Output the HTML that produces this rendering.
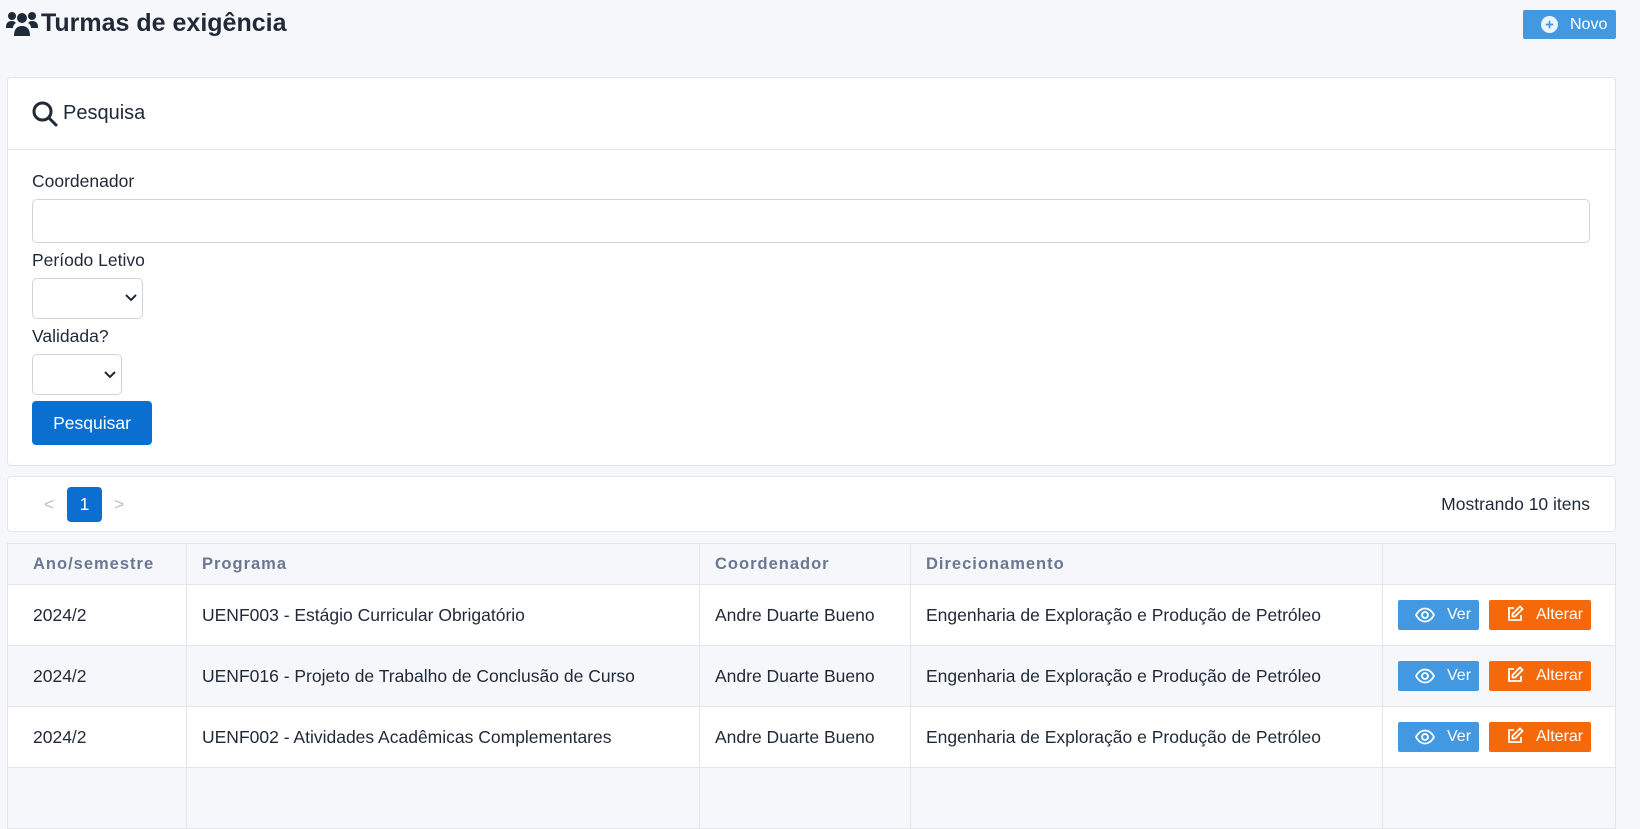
<!DOCTYPE html>
<html><head><meta charset="utf-8"><style>
*{box-sizing:border-box;margin:0;padding:0}
body{width:1640px;height:773px;overflow:hidden;background:#f6f7fb;font-family:"Liberation Sans",sans-serif;color:#1f2937;font-size:17.5px;position:relative}
.abs{position:absolute}
.card{position:absolute;background:#fff;border:1px solid #e2e5ec;border-radius:4px}
.inp{position:absolute;background:#fff;border:1px solid #cfd4dc;border-radius:5px}
table{position:absolute;left:7px;top:543px;width:1609px;border-collapse:collapse;background:#fff;border:1px solid #e2e5ec}
th{height:41px;background:#f6f7fb;color:#6b7891;font-weight:bold;text-align:left;font-size:16.5px;letter-spacing:1px;padding:0 0 0 15px;border:1px solid #e2e5ec}
td{height:61px;padding:0 0 0 15px;border:1px solid #e2e5ec;font-size:17.5px}
th:first-child,td:first-child{padding-left:25px}
tr.alt td{background:#f6f7fb}
.b{display:inline-block;height:30px;line-height:30px;color:#fff;border-radius:2px;font-size:16px;vertical-align:middle}
.ver{background:#4299e1;width:81px;margin-left:15px;padding-left:17px}
.alt2{background:#f6690b;width:102px;margin-left:10px;padding-left:17px}
.b svg{vertical-align:-4px;margin-right:12px}
</style></head><body>
<svg class="abs" style="left:6px;top:11px" width="32" height="26" viewBox="0 0 32 26" fill="#1f2937"><circle cx="6" cy="5" r="4"/><circle cx="26" cy="5" r="4"/><circle cx="16" cy="7" r="5"/><path d="M0 16c0-4 2-6 6-6 2 0 3 1 4 2-2 1-3 3-3 5H0z"/><path d="M32 16c0-4-2-6-6-6-2 0-3 1-4 2 2 1 3 3 3 5h7z"/><path d="M8 25c0-7 3-10 8-10s8 3 8 10z"/></svg>
<div class="abs" style="left:41px;top:9px;font-size:25px;font-weight:bold;color:#1f2937">Turmas de exigência</div>
<div class="abs" style="left:1523px;top:10px;width:93px;height:29px;background:#4299e1;border-radius:2px;color:#fff;font-size:16px;line-height:29px;padding-left:47px">Novo</div>
<svg class="abs" style="left:1541px;top:16px" width="17" height="17" viewBox="0 0 16 16"><circle cx="8" cy="8" r="8" fill="#fff" opacity=".9"/><path d="M8 4.5v7M4.5 8h7" stroke="#4299e1" stroke-width="1.6"/></svg>

<div class="card" style="left:7px;top:77px;width:1609px;height:389px">
 <div style="height:72px;border-bottom:1px solid #e2e5ec"></div>
</div>
<svg class="abs" style="left:32px;top:101px" width="26" height="26" viewBox="0 0 26 26" fill="none" stroke="#1f2937" stroke-width="3"><circle cx="10.5" cy="10.5" r="8.5"/><path d="M17 17l7 7" stroke-linecap="round"/></svg>
<div class="abs" style="left:63px;top:102px;font-size:20px">Pesquisa</div>
<div class="abs" style="left:32px;top:171px">Coordenador</div>
<div class="inp" style="left:32px;top:199px;width:1558px;height:44px"></div>
<div class="abs" style="left:32px;top:250px">Período Letivo</div>
<div class="inp" style="left:32px;top:278px;width:111px;height:41px"></div>
<svg class="abs" style="left:125px;top:294px" width="12" height="8" viewBox="0 0 12 8"><path d="M1 1l5 5 5-5" stroke="#1f2937" stroke-width="2" fill="none"/></svg>
<div class="abs" style="left:32px;top:326px">Validada?</div>
<div class="inp" style="left:32px;top:354px;width:90px;height:41px"></div>
<svg class="abs" style="left:104px;top:371px" width="12" height="8" viewBox="0 0 12 8"><path d="M1 1l5 5 5-5" stroke="#1f2937" stroke-width="2" fill="none"/></svg>
<div class="abs" style="left:32px;top:401px;width:120px;height:44px;background:#0b6fd1;border-radius:4px;color:#fff;line-height:44px;text-align:center">Pesquisar</div>

<div class="card" style="left:7px;top:476px;width:1609px;height:56px"></div>
<div class="abs" style="left:44px;top:494px;color:#b8c0cc">&lt;</div>
<div class="abs" style="left:67px;top:487px;width:35px;height:35px;background:#0b6fd1;border-radius:4px;color:#fff;text-align:center;line-height:35px">1</div>
<div class="abs" style="left:114px;top:494px;color:#b8c0cc">&gt;</div>
<div class="abs" style="right:50px;top:494px">Mostrando 10 itens</div>

<table>
<tr><th style="width:179px">Ano/semestre</th><th style="width:513px">Programa</th><th style="width:211px">Coordenador</th><th style="width:472px">Direcionamento</th><th></th></tr>
<tr><td>2024/2</td><td>UENF003 - Estágio Curricular Obrigatório</td><td>Andre Duarte Bueno</td><td>Engenharia de Exploração e Produção de Petróleo</td><td style="padding:0"><span class="b ver"><svg width="20" height="16" viewBox="0 0 20 16" fill="none" stroke="#fff" stroke-width="1.8"><path d="M1 8c2.5-4.5 5.5-6.5 9-6.5s6.5 2 9 6.5c-2.5 4.5-5.5 6.5-9 6.5S3.5 12.5 1 8z"/><circle cx="10" cy="8" r="3"/></svg>Ver</span><span class="b alt2"><svg width="18" height="18" viewBox="0 0 18 18" fill="none" stroke="#fff" stroke-width="1.8"><path d="M8 3H3v12h12v-5"/><path d="M14 1.5l2.5 2.5L9 11.5H6.5V9z"/></svg>Alterar</span></td></tr>
<tr class="alt"><td>2024/2</td><td>UENF016 - Projeto de Trabalho de Conclusão de Curso</td><td>Andre Duarte Bueno</td><td>Engenharia de Exploração e Produção de Petróleo</td><td style="padding:0"><span class="b ver"><svg width="20" height="16" viewBox="0 0 20 16" fill="none" stroke="#fff" stroke-width="1.8"><path d="M1 8c2.5-4.5 5.5-6.5 9-6.5s6.5 2 9 6.5c-2.5 4.5-5.5 6.5-9 6.5S3.5 12.5 1 8z"/><circle cx="10" cy="8" r="3"/></svg>Ver</span><span class="b alt2"><svg width="18" height="18" viewBox="0 0 18 18" fill="none" stroke="#fff" stroke-width="1.8"><path d="M8 3H3v12h12v-5"/><path d="M14 1.5l2.5 2.5L9 11.5H6.5V9z"/></svg>Alterar</span></td></tr>
<tr><td>2024/2</td><td>UENF002 - Atividades Acadêmicas Complementares</td><td>Andre Duarte Bueno</td><td>Engenharia de Exploração e Produção de Petróleo</td><td style="padding:0"><span class="b ver"><svg width="20" height="16" viewBox="0 0 20 16" fill="none" stroke="#fff" stroke-width="1.8"><path d="M1 8c2.5-4.5 5.5-6.5 9-6.5s6.5 2 9 6.5c-2.5 4.5-5.5 6.5-9 6.5S3.5 12.5 1 8z"/><circle cx="10" cy="8" r="3"/></svg>Ver</span><span class="b alt2"><svg width="18" height="18" viewBox="0 0 18 18" fill="none" stroke="#fff" stroke-width="1.8"><path d="M8 3H3v12h12v-5"/><path d="M14 1.5l2.5 2.5L9 11.5H6.5V9z"/></svg>Alterar</span></td></tr>
<tr class="alt"><td></td><td></td><td></td><td></td><td></td></tr>
</table>
</body></html>
